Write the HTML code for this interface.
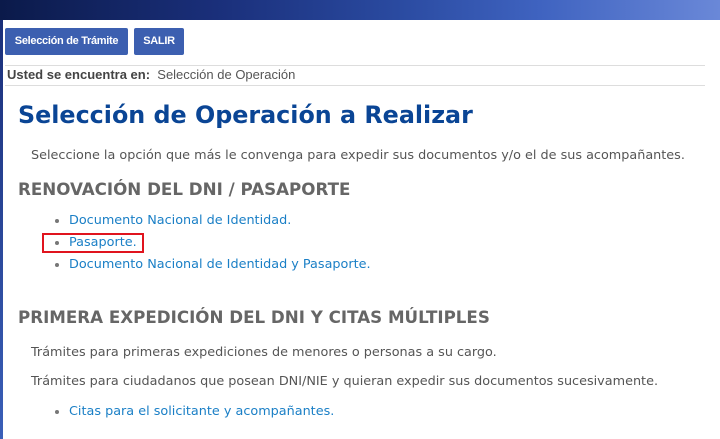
<!DOCTYPE html>
<html><head><meta charset="utf-8"><style>
body{margin:0;width:720px;height:439px;overflow:hidden;background:#fff;font-family:"DejaVu Sans",Verdana,sans-serif;position:relative}
.hdr{position:absolute;left:0;top:0;width:720px;height:20px;background:linear-gradient(90deg,#0b1a4a 0%,#1a2f7a 30%,#2a4aa0 55%,#3f63c0 75%,#6a88d8 100%)}
.strip{position:absolute;left:0;top:20px;width:3px;height:419px;background:linear-gradient(#1a2f7a,#3a5fb8)}
.btn{position:absolute;top:28px;height:27px;background:#3c5fb0;border-radius:2px;color:#fff;font:bold 11px "Liberation Sans",Arial,sans-serif;line-height:27px;text-align:center;letter-spacing:-0.3px}
.line{position:absolute;left:5px;width:700px;height:1px;background:#ddd}
.t{position:absolute;white-space:nowrap}
.li{position:absolute;font-size:12.8px;color:#1a7fc6;white-space:nowrap;line-height:18px}
.li:before{content:"";position:absolute;left:-14px;top:7px;width:4px;height:4px;border-radius:2px;background:#777}
</style></head><body>
<div class="hdr"></div><div class="strip"></div>
<div class="btn" style="left:5px;width:123px">Selección de Trámite</div>
<div class="btn" style="left:134px;width:50px">SALIR</div>
<div class="line" style="top:65px"></div>
<div class="t" style="left:7px;top:66px;font:13px 'Liberation Sans',Arial,sans-serif;color:#555;line-height:18px"><b style="color:#444">Usted se encuentra en:</b>&nbsp; Selección de Operación</div>
<div class="line" style="top:85px"></div>
<div class="t" style="left:18px;top:98px;font-size:23.8px;font-weight:bold;color:#0a4595;line-height:34px">Selección de Operación a Realizar</div>
<div class="t" style="left:31px;top:147px;font-size:12.8px;color:#555;line-height:18px">Seleccione la opción que más le convenga para expedir sus documentos y/o el de sus acompañantes.</div>
<div class="t" style="left:18px;top:178px;font-size:16.7px;font-weight:bold;color:#666;line-height:22px">RENOVACIÓN DEL DNI / PASAPORTE</div>
<div class="li" style="left:69px;top:212px">Documento Nacional de Identidad.</div>
<div class="li" style="left:69px;top:234px">Pasaporte.</div>
<div style="position:absolute;left:42px;top:233px;width:98px;height:16px;border:2px solid #e0141e"></div>
<div class="li" style="left:69px;top:256px">Documento Nacional de Identidad y Pasaporte.</div>
<div class="t" style="left:18px;top:306px;font-size:16.7px;font-weight:bold;color:#666;line-height:22px">PRIMERA EXPEDICIÓN DEL DNI Y CITAS MÚLTIPLES</div>
<div class="t" style="left:31px;top:344px;font-size:12.8px;color:#555;line-height:18px">Trámites para primeras expediciones de menores o personas a su cargo.</div>
<div class="t" style="left:31px;top:373px;font-size:12.8px;color:#555;line-height:18px">Trámites para ciudadanos que posean DNI/NIE y quieran expedir sus documentos sucesivamente.</div>
<div class="li" style="left:69px;top:403px">Citas para el solicitante y acompañantes.</div>
</body></html>
